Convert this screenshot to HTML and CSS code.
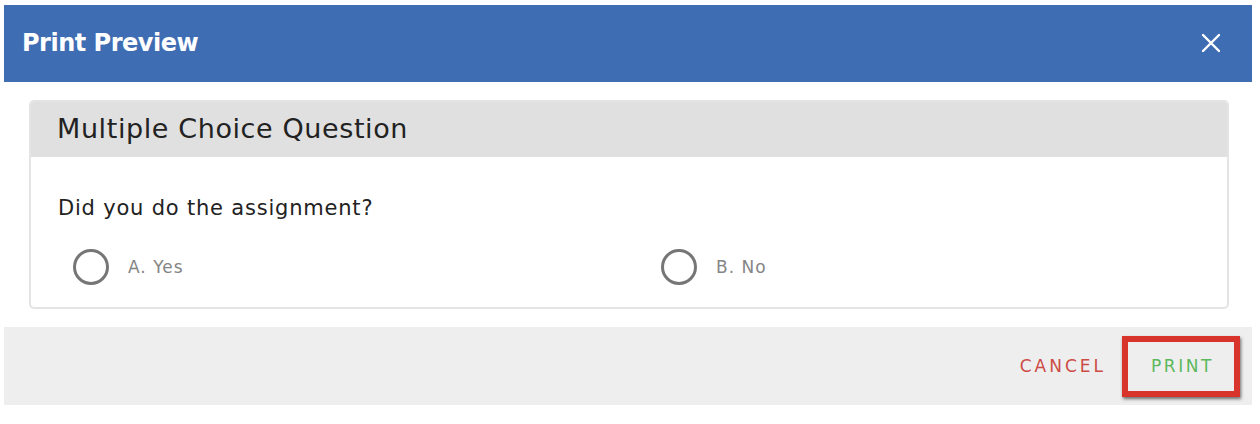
FILE: index.html
```html
<!DOCTYPE html>
<html lang="en">
<head>
<meta charset="utf-8">
<title>Print Preview</title>
<link rel="stylesheet" href="styles.css">
</head>
<body>
<div class="dialog">
  <header class="dialog-header">
    <h1 class="dialog-title">Print Preview</h1>
    <button class="close-btn" aria-label="Close">
      <svg width="20" height="20" viewBox="0 0 20 20"><path d="M2 2 L18 18 M18 2 L2 18" stroke="#fff" stroke-width="2.4" stroke-linecap="round" fill="none"/></svg>
    </button>
  </header>
  <main class="dialog-body">
    <section class="card">
      <div class="card-header">Multiple Choice Question</div>
      <div class="card-content">
        <p class="question">Did you do the assignment?</p>
        <div class="options">
          <label class="option"><span class="radio"></span><span class="option-text">A. Yes</span></label>
          <label class="option"><span class="radio"></span><span class="option-text">B. No</span></label>
        </div>
      </div>
    </section>
  </main>
  <footer class="dialog-footer">
    <button class="btn btn-cancel">CANCEL</button>
    <button class="btn btn-print">PRINT</button>
  </footer>
</div>
</body>
</html>
```
FILE: styles.css
```css
* { box-sizing: border-box; }
html, body { margin: 0; padding: 0; background: #fff; }
body {
  padding: 5px 8px 0 4px;
  font-family: "DejaVu Sans", "Liberation Sans", sans-serif;
}
.dialog { width: 1248px; }
.dialog-header {
  height: 77px;
  background: #3f6db3;
  display: flex;
  align-items: center;
  justify-content: space-between;
  padding: 0 31px 0 18px;
}
.dialog-title {
  margin: 0 0 1px;
  color: #fff;
  font-size: 24px;
  font-weight: 700;
  letter-spacing: -0.5px;
}
.close-btn {
  background: none;
  border: 0;
  padding: 0;
  width: 20px;
  height: 20px;
  display: flex;
  margin-bottom: 2px;
}
.dialog-body {
  padding: 18px 23px 18px 25px;
}
.card {
  border: 2px solid #e4e4e4;
  border-radius: 5px;
  overflow: hidden;
}
.card-header {
  height: 55px;
  background: #e0e0e0;
  display: flex;
  align-items: center;
  padding: 0 0 3px 26px;
  font-size: 27px;
  color: #222;
  letter-spacing: 0.6px;
}
.card-content {
  padding: 39px 26px 22px 27px;
}
.question {
  margin: 0 0 29px;
  font-size: 21px;
  line-height: 24px;
  color: #222;
  letter-spacing: 0.8px;
}
.options {
  display: grid;
  grid-template-columns: 588px 1fr;
}
.option {
  display: flex;
  align-items: center;
  gap: 19px;
  padding-left: 15px;
}
.radio {
  width: 36px;
  height: 36px;
  border: 3px solid #767676;
  border-radius: 50%;
}
.option-text {
  font-size: 17px;
  color: #858585;
  letter-spacing: 1px;
}
.dialog-footer {
  height: 78px;
  background: #eeeeee;
  display: flex;
  align-items: center;
  justify-content: flex-end;
  padding-right: 12px;
  gap: 10px;
}
.btn {
  background: none;
  border: 0;
  font-family: inherit;
  font-size: 17px;
  letter-spacing: 2.6px;
}
.btn-cancel { color: #cd4b45; letter-spacing: 3px; }
.btn-print {
  color: #5cb85c;
  width: 118px;
  height: 61px;
  border: 6px solid #d9342b;
  box-shadow: 1px 2px 3px rgba(0,0,0,0.55);
  padding: 0 0 0 3px;
}
```
